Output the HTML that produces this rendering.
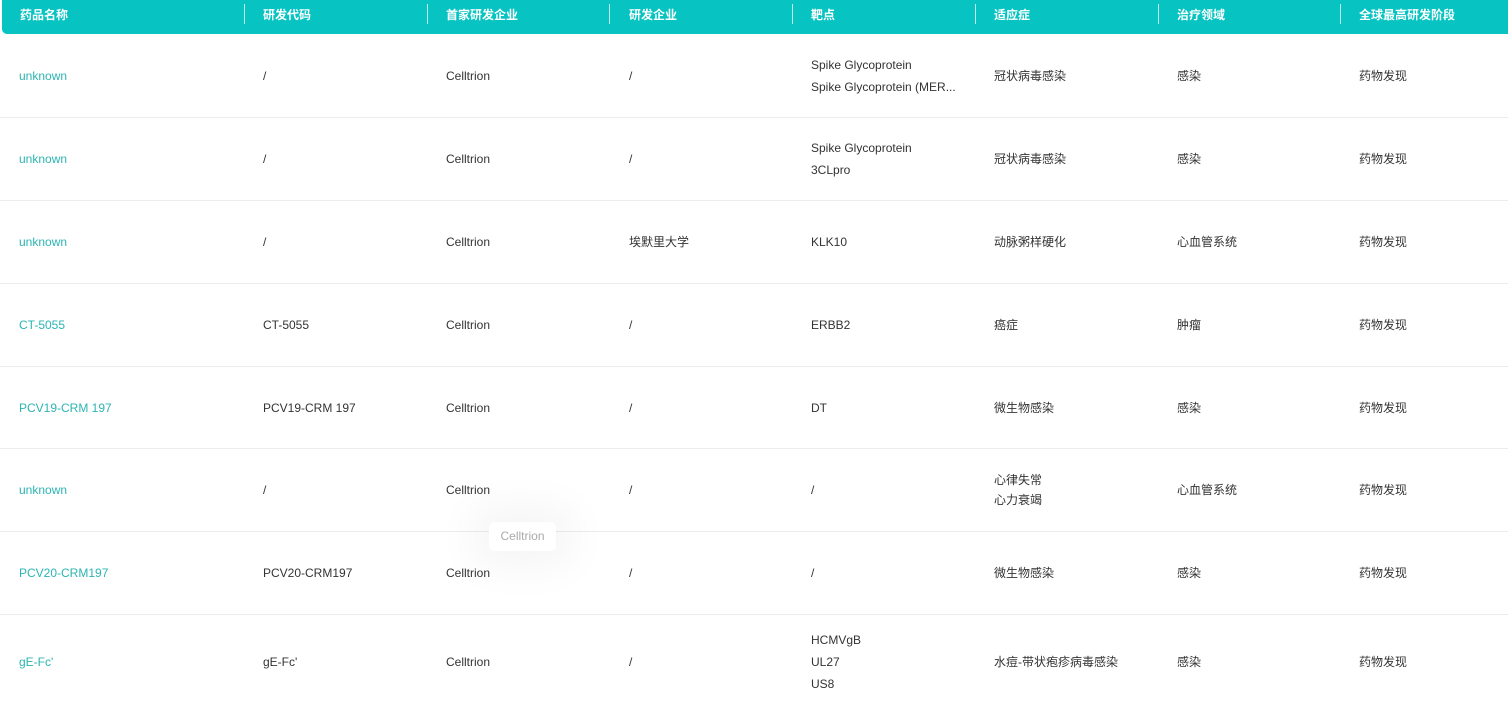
<!DOCTYPE html>
<html><head><meta charset="utf-8"><style>
*{margin:0;padding:0;box-sizing:border-box}
body{width:1508px;height:709px;overflow:hidden;background:#fff;font-family:"Liberation Sans","Noto Sans CJK SC",sans-serif;font-size:12px;color:#333}
.hd{position:absolute;left:2px;top:0;width:1506px;height:34px;background:#07c3c2;border-radius:0 0 0 5px}
.hd div{position:absolute;top:0;height:30px;line-height:30px;color:#fff;font-weight:bold;font-size:12px}
.hd i{position:absolute;top:4px;width:1px;height:20px;background:#bfeeee}
.row{position:absolute;left:0;width:1508px;border-bottom:1px solid #ececec}
.c{position:absolute;top:0;height:100%;display:flex;flex-direction:column;justify-content:center;line-height:22px;white-space:nowrap}
.l{color:#2bb5b3}
.tip{position:absolute;left:489px;top:522px;width:67px;height:29px;background:#fff;border-radius:6px;color:#aaa;line-height:29px;text-align:center;box-shadow:0 0 40px 18px rgba(0,0,0,0.04)}
</style></head><body>
<div class="hd">
<div style="left:18px">药品名称</div><i style="left:242px"></i>
<div style="left:261px">研发代码</div><i style="left:425px"></i>
<div style="left:444px">首家研发企业</div><i style="left:607px"></i>
<div style="left:627px">研发企业</div><i style="left:790px"></i>
<div style="left:809px">靶点</div><i style="left:973px"></i>
<div style="left:992px">适应症</div><i style="left:1156px"></i>
<div style="left:1175px">治疗领域</div><i style="left:1338px"></i>
<div style="left:1357px">全球最高研发阶段</div>
</div>
<div id="rows"></div>
<div class="row" style="top:34px;height:84px"><div class="c l" style="left:19px">unknown</div><div class="c" style="left:263px">/</div><div class="c" style="left:446px">Celltrion</div><div class="c" style="left:629px">/</div><div class="c" style="left:811px"><span>Spike Glycoprotein</span><span>Spike Glycoprotein (MER...</span></div><div class="c" style="left:994px">冠状病毒感染</div><div class="c" style="left:1177px">感染</div><div class="c" style="left:1359px">药物发现</div></div>
<div class="row" style="top:118px;height:83px"><div class="c l" style="left:19px">unknown</div><div class="c" style="left:263px">/</div><div class="c" style="left:446px">Celltrion</div><div class="c" style="left:629px">/</div><div class="c" style="left:811px"><span>Spike Glycoprotein</span><span>3CLpro</span></div><div class="c" style="left:994px">冠状病毒感染</div><div class="c" style="left:1177px">感染</div><div class="c" style="left:1359px">药物发现</div></div>
<div class="row" style="top:201px;height:83px"><div class="c l" style="left:19px">unknown</div><div class="c" style="left:263px">/</div><div class="c" style="left:446px">Celltrion</div><div class="c" style="left:629px">埃默里大学</div><div class="c" style="left:811px">KLK10</div><div class="c" style="left:994px">动脉粥样硬化</div><div class="c" style="left:1177px">心血管系统</div><div class="c" style="left:1359px">药物发现</div></div>
<div class="row" style="top:284px;height:83px"><div class="c l" style="left:19px">CT-5055</div><div class="c" style="left:263px">CT-5055</div><div class="c" style="left:446px">Celltrion</div><div class="c" style="left:629px">/</div><div class="c" style="left:811px">ERBB2</div><div class="c" style="left:994px">癌症</div><div class="c" style="left:1177px">肿瘤</div><div class="c" style="left:1359px">药物发现</div></div>
<div class="row" style="top:367px;height:82px"><div class="c l" style="left:19px">PCV19-CRM 197</div><div class="c" style="left:263px">PCV19-CRM 197</div><div class="c" style="left:446px">Celltrion</div><div class="c" style="left:629px">/</div><div class="c" style="left:811px">DT</div><div class="c" style="left:994px">微生物感染</div><div class="c" style="left:1177px">感染</div><div class="c" style="left:1359px">药物发现</div></div>
<div class="row" style="top:449px;height:83px"><div class="c l" style="left:19px">unknown</div><div class="c" style="left:263px">/</div><div class="c" style="left:446px">Celltrion</div><div class="c" style="left:629px">/</div><div class="c" style="left:811px">/</div><div class="c" style="left:994px;line-height:20px"><span>心律失常</span><span>心力衰竭</span></div><div class="c" style="left:1177px">心血管系统</div><div class="c" style="left:1359px">药物发现</div></div>
<div class="row" style="top:532px;height:83px"><div class="c l" style="left:19px">PCV20-CRM197</div><div class="c" style="left:263px">PCV20-CRM197</div><div class="c" style="left:446px">Celltrion</div><div class="c" style="left:629px">/</div><div class="c" style="left:811px">/</div><div class="c" style="left:994px">微生物感染</div><div class="c" style="left:1177px">感染</div><div class="c" style="left:1359px">药物发现</div></div>
<div class="row" style="top:615px;height:94px;border:none"><div class="c l" style="left:19px">gE-Fc'</div><div class="c" style="left:263px">gE-Fc'</div><div class="c" style="left:446px">Celltrion</div><div class="c" style="left:629px">/</div><div class="c" style="left:811px"><span>HCMVgB</span><span>UL27</span><span>US8</span></div><div class="c" style="left:994px">水痘-带状疱疹病毒感染</div><div class="c" style="left:1177px">感染</div><div class="c" style="left:1359px">药物发现</div></div>
<div class="tip">Celltrion</div>
</body></html>
